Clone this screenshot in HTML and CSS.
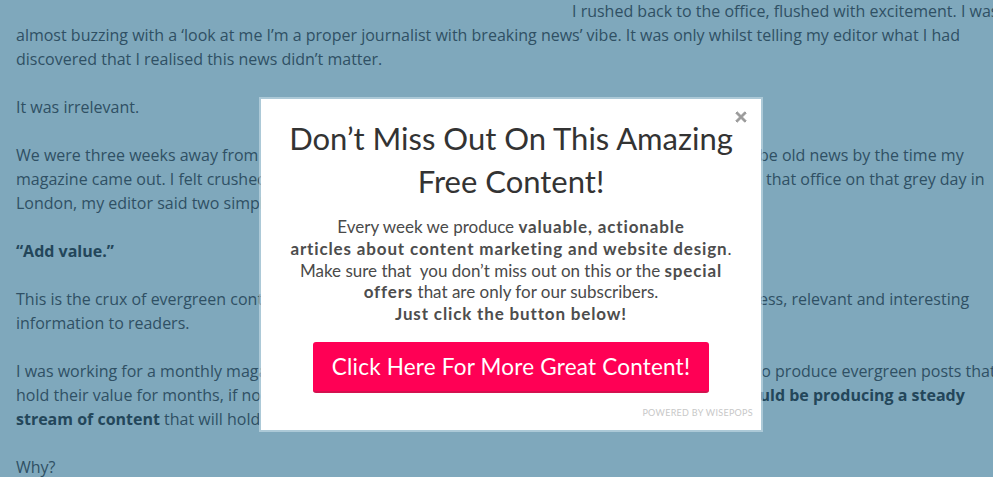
FILE: index.html
```html
<!DOCTYPE html>
<html>
<head>
<meta charset="utf-8">
<link rel="stylesheet" href="styles.css">
</head>
<body>
<div class="page">
  <article class="article">
    <p><span class="lead-gap"></span>I rushed back to the office, flushed with excitement. I was<br>almost buzzing with a ‘look at me I’m a proper journalist with breaking news’ vibe. It was only whilst telling my editor what I had<br>discovered that I realised this news didn’t matter.</p>
    <p>It was irrelevant.</p>
    <p>We were three weeks away from going to print, which meant that whatever I had written would just be old news by the time my<br>magazine came out. I felt crushed and deflated. But instead of dismissing my hard work, as we sat in that office on that grey day in<br>London, my editor said two simple words that would change the way I write forever:</p>
    <p><strong>“Add value.”</strong></p>
    <p>This is the crux of evergreen content: it’s all about creating online posts that keep on providing timeless, relevant and interesting<br>information to readers.</p>
    <p>I was working for a monthly magazine, so the news had to stay fresh for weeks. Now, you just need to produce evergreen posts that<br>hold their value for months, if not years. With the right content strategy in place, <strong>your business should be producing a steady<br>stream of content</strong> that will hold its value long after it is published.</p>
    <p>Why?</p>
  </article>

  <div class="popup">
    <span class="close" aria-label="close">
      <svg width="12" height="12" viewBox="0 0 12 12"><path d="M2.2 0.8 L6 4.6 L9.8 0.8 L11.2 2.2 L7.4 6 L11.2 9.8 L9.8 11.2 L6 7.4 L2.2 11.2 L0.8 9.8 L4.6 6 L0.8 2.2 Z" fill="#9a9a9a" stroke="#9a9a9a" stroke-width="1" stroke-linejoin="round"/></svg>
    </span>
    <h1 class="popup-title">Don’t Miss Out On This Amazing<br>Free Content!</h1>
    <p class="popup-text">Every week we produce <b>valuable, actionable</b><br><b>articles about content marketing and website design</b>.<br>Make sure that &nbsp;you don’t miss out on this or the <b>special</b><br><b>offers</b> that are only for our subscribers.<br><b>Just click the button below!</b></p>
    <a class="cta" href="#">Click Here For More Great Content!</a>
    <div class="powered">POWERED BY WISEPOPS</div>
  </div>
</div>
</body>
</html>
```

FILE: styles.css
```css
html, body {
  margin: 0;
  padding: 0;
}
body {
  background: #7fa8bc;
  overflow: hidden;
  width: 993px;
  height: 477px;
}
.page {
  position: relative;
  width: 993px;
  height: 477px;
  overflow: hidden;
}
.article {
  padding: 0 0 0 16px;
  margin-top: -1px;
  width: 1100px;
  font-family: "Open Sans", "Noto Sans", sans-serif;
  font-size: 16px;
  line-height: 24px;
  color: #2f5064;
  white-space: nowrap;
}
.article p {
  margin: 0 0 24px 0;
}
.article strong {
  color: #23465a;
  font-weight: 700;
}
.lead-gap {
  display: inline-block;
  width: 556px;
}
.popup {
  position: absolute;
  left: 261px;
  top: 99px;
  width: 500px;
  height: 331px;
  box-sizing: border-box;
  background: #ffffff;
  box-shadow: 0 0 0 2px rgba(210, 228, 236, 0.55);
  display: flex;
  flex-direction: column;
  align-items: center;
  padding-top: 18px;
  font-family: "Lato", "Open Sans", sans-serif;
}
.close {
  position: absolute;
  right: 14px;
  top: 12px;
  width: 12px;
  height: 12px;
  display: flex;
}
.popup-title {
  margin: 0;
  font-size: 31px;
  line-height: 43px;
  font-weight: 400;
  color: #333333;
  text-align: center;
  white-space: nowrap;
}
.popup-text {
  margin: 13px 0 0 0;
  font-size: 17px;
  letter-spacing: 0;
  line-height: 21.75px;
  color: #4a4a4a;
  text-align: center;
  white-space: nowrap;
}
.popup-text b {
  font-weight: 700;
  letter-spacing: 0.85px;
  color: #4d4d4d;
}
.cta {
  margin-top: 17px;
  width: 396px;
  height: 51px;
  box-sizing: border-box;
  background: #ff0055;
  border-bottom: 2px solid #d4114f;
  border-radius: 3px;
  color: #ffffff;
  text-decoration: none;
  font-size: 22.5px;
  letter-spacing: 0.2px;
  display: flex;
  align-items: center;
  justify-content: center;
  padding-top: 1px;
}
.powered {
  align-self: flex-end;
  margin-top: 14px;
  margin-right: 8px;
  font-size: 9px;
  letter-spacing: 0.3px;
  color: #c8c8c8;
}
```
